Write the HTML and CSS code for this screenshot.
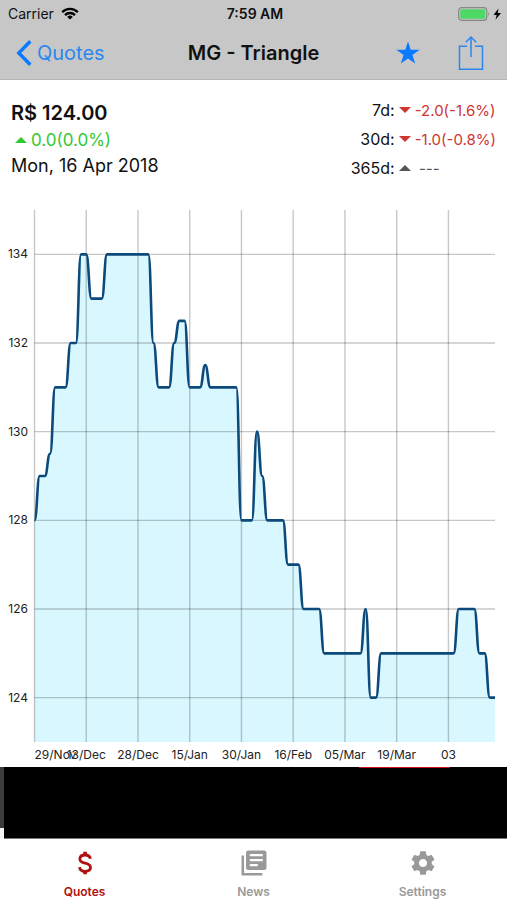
FILE: index.html
```html
<!DOCTYPE html>
<html lang="en">
<head>
  <meta charset="UTF-8" />
  <meta name="viewport" content="width=device-width, initial-scale=1.0"/>
  <title>MG - Triangle</title>
  <link rel="stylesheet" href="styles.css">
</head>
<body>

  <header class="top">
    <div class="status">
      <div class="carrier">
        <span>Carrier</span>
        <svg width="18" height="13" viewBox="0 0 18 13" fill="none" stroke="#000" stroke-width="2.3">
          <path d="M1.2 5.2a11 11 0 0 1 15.6 0"/>
          <path d="M4 8.1a7 7 0 0 1 10 0"/>
          <path d="M9 12.6L6.2 9.9a4 4 0 0 1 5.6 0z" fill="#000" stroke="none"/>
        </svg>
      </div>
      <span class="time">7:59 AM</span>
      <div class="battery">
        <svg width="44" height="14" viewBox="0 0 44 14">
          <rect x="0.7" y="0.7" width="28" height="12.6" rx="3" fill="none" stroke="#868686" stroke-width="1.2"/>
          <rect x="2.3" y="2.3" width="24.8" height="9.4" rx="1.5" fill="#4cd964"/>
          <path d="M30 4.8q1.8 2.2 0 4.4z" fill="#868686"/>
          <path d="M40.5 1.5L35.5 8h3.2l-1.2 4.7L43 6h-3.3z" fill="#000"/>
        </svg>
      </div>
    </div>
    <nav class="navbar">
      <a class="back" href="#">
        <svg width="16" height="26" viewBox="0 0 16 26" fill="none" stroke="#0a7aff" stroke-width="3.4">
          <path d="M14.3 1.3L2.8 13l11.5 11.7"/>
        </svg>
        Quotes
      </a>
      <h1>MG - Triangle</h1>
      <div class="actions">
        <button type="button" aria-label="Favorite">
          <svg width="24" height="24" viewBox="0 0 24 24" fill="#0a7aff">
            <path d="M12 0.6l2.7 8.2h8.9l-7.2 5.3 2.8 8.5L12 17.4l-7.2 5.2 2.8-8.5L0.4 8.8h8.9z"/>
          </svg>
        </button>
        <button type="button" aria-label="Share">
          <svg width="26" height="36" viewBox="0 0 26 36" fill="none" stroke="#2b87ee" stroke-width="1.5">
            <path d="M9 11.3H1.5v22.9h23V11.3H17"/>
            <path d="M13 22V2M7.8 7.2L13 2l5.2 5.2"/>
          </svg>
        </button>
      </div>
    </nav>
  </header>

  <main>
    <section class="summary">
      <div class="quote">
        <div class="price">R$ 124.00</div>
        <div class="change"><span class="arrow up"></span>0.0(0.0%)</div>
        <div class="date">Mon, 16 Apr 2018</div>
      </div>
      <table class="periods">
        <tr><th scope="row">7d:</th><td class="loss"><span class="arrow down"></span>-2.0(-1.6%)</td></tr>
        <tr><th scope="row">30d:</th><td class="loss"><span class="arrow down"></span>-1.0(-0.8%)</td></tr>
        <tr><th scope="row">365d:</th><td class="none"><span class="arrow up"></span> ---</td></tr>
      </table>
    </section>

    <svg class="chart" viewBox="0 0 507 567" role="img" aria-label="Price history">
      <path id="area" class="area"/>
      <g id="grid" class="grid"></g>
      <path id="line" class="line"/>
      <g id="labels" class="labels"></g>
    </svg>
  </main>

  <div class="banner">
    <div class="banner-edge"></div>
    <div class="banner-accent"></div>
  </div>

  <nav class="tabs">
    <a class="tab active" href="#">
      <svg width="28" height="28" viewBox="0 0 28 28" fill="none" stroke="currentColor" stroke-width="2.8">
        <path d="M19.4 9.8C19 7.3 17 6 14.1 6c-3.2 0-5.2 1.6-5.2 4 0 2.5 1.8 3.4 5.2 4.1 3.5.8 5.4 1.8 5.4 4.2S17.4 22.3 14.2 22.3c-3.3 0-5.4-1.5-5.6-4.2"/>
        <path d="M14.1 2.8V6M14.1 22v3.2" stroke-width="3.6"/>
      </svg>
      <span>Quotes</span>
    </a>
    <a class="tab" href="#">
      <svg width="28" height="28" viewBox="0 0 28 28" fill="none" stroke="currentColor" stroke-width="2.5">
        <path d="M2.8 6.5v18.7h19.5"/>
        <path fill="currentColor" fill-rule="evenodd" stroke="none" d="M8.5 1.5h15.5a2.5 2.5 0 0 1 2.5 2.5v14.5a2.5 2.5 0 0 1-2.5 2.5H8.5A2.5 2.5 0 0 1 6 18.5V4a2.5 2.5 0 0 1 2.5-2.5zM9.8 5v2.3h13V5zM9.8 10v2.3h13V10zM9.8 15v2.3h8V15z"/>
      </svg>
      <span>News</span>
    </a>
    <a class="tab" href="#">
      <svg width="28" height="28" viewBox="0 0 24 24" fill="currentColor">
        <path d="M19.43 12.98c.04-.32.07-.64.07-.98s-.03-.66-.07-.98l2.11-1.65c.19-.15.24-.42.12-.64l-2-3.46c-.12-.22-.39-.3-.61-.22l-2.49 1c-.52-.4-1.08-.73-1.69-.98l-.38-2.65C14.46 2.18 14.25 2 14 2h-4c-.25 0-.46.18-.49.42l-.38 2.65c-.61.25-1.17.59-1.69.98l-2.49-1c-.23-.09-.49 0-.61.22l-2 3.46c-.13.22-.07.49.12.64l2.11 1.65c-.04.32-.07.65-.07.98s.03.66.07.98l-2.11 1.65c-.19.15-.24.42-.12.64l2 3.46c.12.22.39.3.61.22l2.49-1c.52.4 1.08.73 1.69.98l.38 2.65c.03.24.24.42.49.42h4c.25 0 .46-.18.49-.42l.38-2.65c.61-.25 1.17-.59 1.69-.98l2.49 1c.23.09.49 0 .61-.22l2-3.46c.12-.22.07-.49-.12-.64l-2.11-1.65zM12 15.5c-1.93 0-3.5-1.57-3.5-3.5s1.57-3.5 3.5-3.5 3.5 1.57 3.5 3.5-1.57 3.5-3.5 3.5z"/>
      </svg>
      <span>Settings</span>
    </a>
  </nav>

  <script src="chart.js"></script>
</body>
</html>
```
FILE: styles.css
```css
* {
  box-sizing: border-box;
}
body {
  margin: 0;
  min-height: 100vh;
  display: flex;
  flex-direction: column;
  font-family: Inter, "Liberation Sans", sans-serif;
  background-color: #fff;
  color: #111;
}
a {
  text-decoration: none;
}
svg {
  display: block;
}

/* top bar */
.top {
  background-color: #c7c7c7;
  border-bottom: 1px solid #b4b4b4;
}
.status {
  display: grid;
  grid-template-columns: 1fr auto 1fr;
  align-items: center;
  height: 27px;
  padding: 0 5px 0 8px;
  font-size: 14px;
}
.carrier {
  display: flex;
  align-items: center;
  gap: 7px;
}
.time {
  font-weight: 600;
}
.battery {
  justify-self: end;
}
.navbar {
  display: grid;
  grid-template-columns: 1fr auto 1fr;
  align-items: center;
  height: 52px;
  padding: 0 16px;
}
.back {
  display: flex;
  align-items: center;
  gap: 5px;
  font-size: 20px;
  color: #2b87ee;
}
h1 {
  margin: 0;
  font-size: 20px;
  font-weight: 600;
}
.actions {
  display: flex;
  align-items: center;
  justify-content: flex-end;
  gap: 38px;
  padding-right: 7px;
}
button {
  padding: 0;
  border: 0;
  background: none;
  cursor: pointer;
}

/* price and changes */
.summary {
  display: flex;
  justify-content: space-between;
  padding: 16px 11px 17px;
}
.quote {
  padding-top: 3px;
  font-size: 18px;
  line-height: 26px;
}
.price {
  font-size: 20px;
  line-height: 28px;
  font-weight: 600;
}
.change {
  font-size: 17px;
  color: #32c832;
}
.arrow {
  display: inline-block;
  border: 6px solid transparent;
  vertical-align: 3px;
}
.up {
  border-top: 0;
  border-bottom-color: currentColor;
}
.down {
  border-bottom: 0;
  border-top-color: currentColor;
}
.change .arrow {
  margin: 0 4px;
}
.periods {
  border-collapse: collapse;
  font-size: 15px;
  line-height: 29px;
}
.periods th {
  padding: 0;
  font-size: 16px;
  font-weight: 400;
  text-align: right;
}
.periods td {
  padding: 0 0 0 4px;
}
.periods .arrow {
  margin-right: 4px;
}
.loss {
  color: #d03530;
}
.none {
  color: #555;
}

/* chart */
.chart {
  width: 100%;
  height: auto;
}
.area {
  fill: #d9f7ff;
}
.grid {
  stroke: #000;
  stroke-opacity: 0.22;
  stroke-width: 1.4;
}
.line {
  fill: none;
  stroke: #0b4a7a;
  stroke-width: 2.6;
}
.labels {
  font-size: 12px;
  fill: #222;
}

/* ad banner */
.banner {
  display: flex;
  height: 72px;
  border-bottom: 1px solid #777;
  background-color: #000;
}
.banner-edge {
  width: 4px;
  height: 61px;
  background-color: #3c3c3c;
  box-shadow: 0 11px #f4f4f4;
}
.banner-accent {
  width: 18%;
  height: 1px;
  margin-left: 70%;
  background-color: #d01020;
}

/* tab bar */
.tabs {
  display: flex;
  flex: 1;
}
.tab {
  flex: 1;
  display: flex;
  flex-direction: column;
  align-items: center;
  gap: 7px;
  padding-top: 10px;
  font-size: 12px;
  font-weight: 600;
  color: #999;
}
.active {
  color: #b01010;
}
```
FILE: chart.js
```js
// [price, number of days it was held]
const runs = [
  [128, 1], [129, 2], [129.5, 1], [131, 3], [132, 2], [134, 2], [133, 3],
  [134, 9], [132, 1], [131, 3], [132, 1], [132.5, 2], [131, 3], [131.5, 1],
  [131, 6], [128, 3], [130, 1], [129, 1], [128, 4], [127, 3], [126, 4],
  [125, 8], [126, 1], [124, 2], [125, 15], [126, 4], [125, 2], [124, 2]
];
const dates = ['29/Nov', '13/Dec', '28/Dec', '15/Jan', '30/Jan', '16/Feb', '05/Mar', '19/Mar', '03'];

const plot = { left: 34.5, right: 495, top: 10, bottom: 542 };
const prices = runs.flatMap(([price, days]) => Array(days).fill(price));
const step = (plot.right - plot.left) / (prices.length - 1);
const getX = i => plot.left + i * step;
const getY = price => plot.bottom - (price - 123) * (plot.bottom - plot.top) / 12;

let path = `M${getX(0)} ${getY(prices[0])}`;
for (let i = 1; i < prices.length; i++) {
  const mid = (getX(i - 1) + getX(i)) / 2;
  const from = getY(prices[i - 1]);
  const to = getY(prices[i]);
  path += `C${mid} ${from} ${mid} ${to} ${getX(i)} ${to}`;
}
document.getElementById('line').setAttribute('d', path);
document.getElementById('area').setAttribute('d', `${path}V${plot.bottom}H${plot.left}Z`);

let gridLines = '';
let texts = '';
dates.forEach((date, i) => {
  const gx = getX(i * 10);
  gridLines += `<path d="M${gx} ${plot.top}V${plot.bottom}"/>`;
  texts += `<text x="${gx}" y="559" text-anchor="${i ? 'middle' : 'start'}">${date}</text>`;
});
for (let price = 124; price <= 134; price += 2) {
  gridLines += `<path d="M${plot.left} ${getY(price)}H${plot.right}"/>`;
  texts += `<text x="28" y="${getY(price) + 4}" text-anchor="end">${price}</text>`;
}
document.getElementById('grid').innerHTML = gridLines;
document.getElementById('labels').innerHTML = texts;
```
